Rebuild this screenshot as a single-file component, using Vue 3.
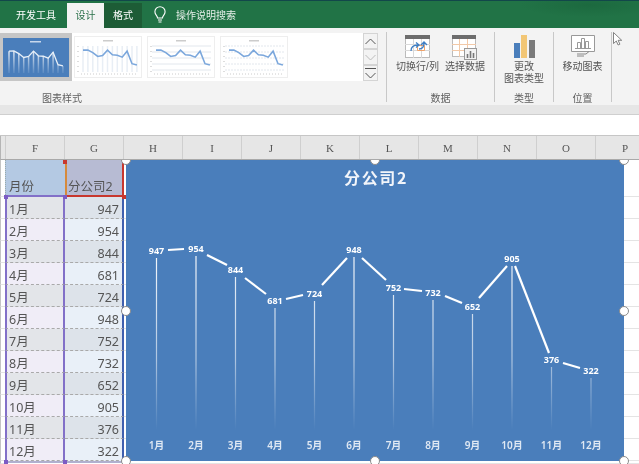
<script setup>
const months = ['1月', '2月', '3月', '4月', '5月', '6月', '7月', '8月', '9月', '10月', '11月', '12月']
const values = [947, 954, 844, 681, 724, 948, 752, 732, 652, 905, 376, 322]
const columns = ['F', 'G', 'H', 'I', 'J', 'K', 'L', 'M', 'N', 'O', 'P']

const rows = months.map((month, i) => ({ month, value: values[i], odd: i % 2 === 0 }))

// chart coordinates are relative to the chart box (126,160)
const labelY = [91, 89, 110, 141, 134, 90, 128, 133, 147, 99, 200, 211]
const points = months.map((month, i) => ({
  month,
  value: values[i],
  x: 30.5 + i * 39.5,
  labelY: labelY[i]
}))

const segments = [
  [42, 90, 58, 89], [81, 95, 101, 105], [119, 118, 140, 134], [160, 139, 177, 135],
  [196, 125, 221, 98], [236, 98, 260, 120], [278, 129, 296, 131], [319, 136, 336, 143],
  [353, 138, 381, 106], [389, 106, 423, 193], [437, 203, 454, 208]
]

const thumbPoints = months.map((m, i) => ({
  x: 6 + i * 4.9,
  y: 35.6 - values[i] * 0.0237
}))
const thumbPath = thumbPoints.map(p => `${p.x},${p.y}`).join(' ')
</script>

<template>
  <div class="window">
    <header class="tabbar">
      <span class="tab">开发工具</span>
      <span class="tab active">设计</span>
      <span class="tab format">格式</span>
      <svg class="bulb" width="14" height="18" viewBox="0 0 14 18" fill="none" stroke="#fff" stroke-width="1.1">
        <path d="M4.5 12c0-2.2-2.6-3.2-2.6-6.2a5.1 5.1 0 0 1 10.2 0c0 3-2.6 4-2.6 6.2z" />
        <path d="M5 14h4M5.5 16h3" />
      </svg>
      <span class="search">操作说明搜索</span>
    </header>

    <section class="ribbon">
      <div class="styles">
        <div class="gallery-row">
          <div class="gallery">
            <div class="thumb selected">
              <svg width="66" height="39" viewBox="0 0 66 39">
                <defs>
                  <linearGradient id="thumbDrop" gradientUnits="userSpaceOnUse" x1="0" y1="12" x2="0" y2="35">
                    <stop offset="0" stop-color="#fff" stop-opacity=".85" />
                    <stop offset="1" stop-color="#fff" stop-opacity=".1" />
                  </linearGradient>
                </defs>
                <rect width="66" height="39" fill="#4a7ebb" />
                <rect x="27" y="3" width="11" height="1.5" fill="#c8d8ec" />
                <path v-for="p in thumbPoints" :key="p.x" :d="`M${p.x} ${p.y}V35`" stroke="url(#thumbDrop)" stroke-width="1.5" />
                <polyline :points="thumbPath" fill="none" stroke="#e8f0f8" stroke-width="1.3" />
              </svg>
            </div>
            <div class="thumb plain">
              <svg width="66" height="40" viewBox="0 0 66 40">
                <rect x="28" y="3" width="10" height="1.5" fill="#ccc" />
                <path v-for="p in thumbPoints" :key="p.x" :d="`M${p.x + 2} 9V35`" stroke="#e8eef5" stroke-width="1.5" />
                <path d="M3 9V36" stroke="#bbb" stroke-dasharray="1 4" />
                <polyline :points="thumbPath" fill="none" stroke="#7ba7dc" stroke-width="1.6" transform="translate(2 0)" />
                <path d="M6 37H63" stroke="#ccc" stroke-dasharray="1 2" />
              </svg>
            </div>
            <div class="thumb plain">
              <svg width="66" height="40" viewBox="0 0 66 40">
                <rect x="28" y="3" width="10" height="1.5" fill="#ccc" />
                <path v-for="i in 5" :key="i" :d="`M4 ${3 + i * 6}H63`" stroke="#e2e7ed" />
                <path d="M3 9V36" stroke="#bbb" stroke-dasharray="1 4" />
                <polyline :points="thumbPath" fill="none" stroke="#7ba7dc" stroke-width="1.6" transform="translate(2 0)" />
                <path d="M6 37H63" stroke="#ccc" stroke-dasharray="1 2" />
              </svg>
            </div>
            <div class="thumb plain">
              <svg width="66" height="40" viewBox="0 0 66 40">
                <rect x="28" y="3" width="10" height="1.5" fill="#ccc" />
                <path v-for="i in 5" :key="i" :d="`M4 ${3 + i * 6}H63`" stroke="#e2e7ed" stroke-dasharray="2 1" />
                <path d="M3 9V36" stroke="#bbb" stroke-dasharray="1 4" />
                <polyline :points="thumbPath" fill="none" stroke="#7ba7dc" stroke-width="1.6" transform="translate(2 0)" />
                <path d="M6 37H63" stroke="#ccc" stroke-dasharray="1 2" />
              </svg>
            </div>
          </div>
          <div class="spinner">
            <span class="spin">
              <svg width="11" height="7" viewBox="0 0 11 7" fill="none" stroke="#555"><path d="M.5 6 5.5 1l5 5" /></svg>
            </span>
            <span class="spin">
              <svg width="11" height="7" viewBox="0 0 11 7" fill="none" stroke="#bbb"><path d="M.5 1l5 5 5-5" /></svg>
            </span>
            <span class="spin more">
              <svg width="11" height="12" viewBox="0 0 11 12" fill="none" stroke="#555"><path d="M0 1.5H11" /><path d="M.5 6l5 5 5-5" /></svg>
            </span>
          </div>
        </div>
        <div class="group-name">图表样式</div>
      </div>

      <div class="group data">
        <div class="tools">
          <div class="tool">
            <div class="icon">
              <svg width="25" height="23" viewBox="0 0 25 23">
                <rect x=".5" y=".5" width="24" height="22" fill="#fff" stroke="#bbb" />
                <rect width="25" height="4" fill="#6d6d6d" />
                <path d="M0 9.5H25M0 15.5H25M8.5 4V23M16.5 4V23" stroke="#d9d9d9" />
                <path d="M12.5 10.5h7v5h-7z" stroke="#f0a36a" fill="none" />
                <path d="M6 16c0-4 2-6 7-6M11 7.5l3 2.5-3 2.500M14 14c3 0 5-1 5-6M16 10l3-3 3 3" fill="none" stroke="#3f7fc4" stroke-width="1.3" />
              </svg>
            </div>
            <span>切换行/列</span>
          </div>
          <div class="tool">
            <div class="icon">
              <svg width="25" height="25" viewBox="0 0 25 25">
                <rect x=".5" y=".5" width="23" height="21" fill="#fff" stroke="#bbb" />
                <rect width="24" height="4" fill="#6d6d6d" />
                <path d="M0 9.5H24M0 15.5H24M7.5 4V22M15.5 4V22" stroke="#f2c9a8" />
                <rect x="12.5" y="13.5" width="12" height="11" fill="#f3f3f3" stroke="#999" />
                <path d="M15.5 23v-4M18.5 23v-7M21.5 23v-5" stroke="#777" stroke-width="1.6" />
              </svg>
            </div>
            <span>选择数据</span>
          </div>
        </div>
        <div class="group-name">数据</div>
      </div>

      <div class="group type">
        <div class="tools">
          <div class="tool">
            <div class="icon">
              <svg width="21" height="23" viewBox="0 0 21 23">
                <rect y="8" width="6" height="15" fill="#4a7ebb" />
                <rect x="7" width="6" height="23" fill="#f2c675" />
                <rect x="15" y="5" width="6" height="18" fill="#7a7a7a" />
              </svg>
            </div>
            <span>更改<br />图表类型</span>
          </div>
        </div>
        <div class="group-name">类型</div>
      </div>

      <div class="group place">
        <div class="tools">
          <div class="tool">
            <div class="icon">
              <svg width="24" height="22" viewBox="0 0 24 22" fill="none">
                <path d="M.5.5h23v16H.5z" fill="#fff" stroke="#999" />
                <path d="M6.5 13V7.5h3V13M10.5 13V3.500h3V13M14.5 13V6.500h3V13M4 13.500h16" stroke="#999" />
                <path d="M6 19h9l3-2.500M6 21h7" stroke="#888" />
              </svg>
            </div>
            <span>移动图表</span>
          </div>
        </div>
        <div class="group-name">位置</div>
      </div>

      <svg class="cursor" width="10" height="14" viewBox="0 0 10 14">
        <path d="M.5.5v11l2.8-2.5 1.8 4 1.8-.8-1.8-3.9h3.600z" fill="#fff" stroke="#666" stroke-width=".8" />
      </svg>
    </section>
    <div class="ribbon-foot"></div>
    <div class="formula"></div>

    <div class="col-heads">
      <span v-for="c in columns" :key="c" class="col-head">{{ c }}</span>
    </div>

    <div class="sheet">
      <div class="row head">
        <div class="gutter"></div>
        <div class="cell month-head">月份</div>
        <div class="cell company-head">分公司2</div>
        <div class="rest"></div>
      </div>
      <div v-for="row in rows" :key="row.month" class="row" :class="{ odd: row.odd }">
        <div class="gutter"></div>
        <div class="cell month">{{ row.month }}</div>
        <div class="cell value">{{ row.value }}</div>
        <div class="rest"></div>
      </div>
      <div class="row tail">
        <div class="gutter"></div>
        <div class="strip"></div>
        <div class="rest"></div>
      </div>

      <i class="mark red" style="left: 63px; top: 0"></i>
      <i class="mark purple" style="left: 4px; top: 35px"></i>
      <i class="mark purple" style="left: 63px; top: 35px"></i>
      <i class="mark red" style="left: 122px; top: 35px"></i>
      <i class="mark purple" style="left: 4px; top: 300px"></i>
      <i class="mark purple" style="left: 63px; top: 300px"></i>

      <div class="chart">
        <svg width="498" height="301" viewBox="0 0 498 301">
          <defs>
            <linearGradient id="drop" gradientUnits="userSpaceOnUse" x1="0" y1="95" x2="0" y2="270">
              <stop offset="0" stop-color="#fff" stop-opacity=".95" />
              <stop offset=".6" stop-color="#fff" stop-opacity=".55" />
              <stop offset="1" stop-color="#fff" stop-opacity="0" />
            </linearGradient>
          </defs>
          <text class="chart-title" x="250" y="24" text-anchor="middle">分公司2</text>
          <path
            v-for="p in points"
            :key="p.month"
            :d="`M${p.x} ${p.labelY + 7}V270`"
            stroke="url(#drop)"
            stroke-width="1.2"
          />
          <line
            v-for="(s, i) in segments"
            :key="i"
            :x1="s[0]"
            :y1="s[1]"
            :x2="s[2]"
            :y2="s[3]"
            stroke="#fff"
            stroke-width="2.2"
          />
          <text
            v-for="p in points"
            :key="'v' + p.month"
            class="point-label"
            :x="p.x"
            :y="p.labelY + 3"
            text-anchor="middle"
          >{{ p.value }}</text>
          <text
            v-for="p in points"
            :key="'m' + p.month"
            class="axis-label"
            :x="p.x"
            y="289"
            text-anchor="middle"
          >{{ p.month }}</text>
        </svg>
        <i class="handle" style="left: 0; top: 0"></i>
        <i class="handle" style="left: 50%; top: 0"></i>
        <i class="handle" style="left: 100%; top: 0"></i>
        <i class="handle" style="left: 0; top: 50%"></i>
        <i class="handle" style="left: 100%; top: 50%"></i>
        <i class="handle" style="left: 0; top: 100%"></i>
        <i class="handle" style="left: 50%; top: 100%"></i>
        <i class="handle" style="left: 100%; top: 100%"></i>
      </div>
    </div>
  </div>
</template>

<style>
html, body {
  margin: 0;
  overflow: hidden;
  background: #fff;
}
</style>

<style scoped>
.window {
  width: 639px;
  height: 464px;
  overflow: hidden;
  background: #fff;
  font-family: "Noto Sans", "Noto Sans CJK SC", sans-serif;
  color: #555;
  filter: blur(0.3px);
}

.tabbar {
  height: 27px;
  border-top: 1px solid #12474a;
  background: radial-gradient(ellipse 70px 12px at 590px 4px, #1c693f, transparent), #217346;
  display: flex;
  align-items: flex-end;
  color: #fff;
  font-size: 10px;
}

.tab {
  height: 25px;
  line-height: 25px;
  padding: 0 11px 0 16px;
}

.tab.active {
  width: 37px;
  padding: 0;
  text-align: center;
  background: #f3f3f3;
  color: #2a7049;
}

.tab.format {
  width: 38px;
  padding: 0;
  text-align: center;
  background: #1d5c36;
}

.bulb {
  margin: 0 9px 4px 11px;
}

.search {
  height: 25px;
  line-height: 25px;
  color: #e6efe9;
}

.ribbon {
  height: 77px;
  position: relative;
  display: flex;
  background: #f3f3f3;
  font-size: 10px;
  color: #555;
}

.styles {
  width: 386px;
  flex: none;
  padding-top: 5px;
  box-sizing: border-box;
}

.gallery-row {
  display: flex;
  height: 48px;
}

.gallery {
  width: 363px;
  background: #fff;
  display: flex;
  align-items: center;
  gap: 7px;
}

.thumb {
  flex: none;
  display: flex;
}

.thumb.selected {
  width: 72px;
  height: 48px;
  background: #c6c6c6;
  align-items: center;
  justify-content: center;
  margin-right: -4px;
}

.thumb.plain {
  background: #fff;
  box-shadow: 0 0 0 1px #eeeeee;
}

.spinner {
  width: 15px;
  display: flex;
  flex-direction: column;
}

.spin {
  height: 16px;
  box-sizing: border-box;
  border: 1px solid #d4d4d4;
  display: flex;
  align-items: center;
  justify-content: center;
}

.group-name {
  text-align: center;
  color: #5f5f5f;
  line-height: 14px;
  position: absolute;
  bottom: 0;
}

.styles .group-name {
  left: 0;
  width: 124px;
}

.group {
  flex: none;
  position: relative;
  box-sizing: border-box;
  margin: 4px 0 3px;
  border-left: 1px solid #c8c8c8;
}

.group .group-name {
  left: 0;
  right: 0;
  bottom: -3px;
}

.group.data { width: 108px; }
.group.type { width: 59px; }
.group.place { width: 59px; border-right: 1px solid #c8c8c8; }

.tools {
  display: flex;
  justify-content: center;
  gap: 6px;
  padding-top: 3px;
}

.tool {
  display: flex;
  flex-direction: column;
  align-items: center;
  text-align: center;
  line-height: 12px;
  white-space: nowrap;
  font-family: "Liberation Sans", "Noto Sans CJK SC", sans-serif;
}

.icon {
  height: 26px;
}

.icon svg {
  display: block;
}

.cursor {
  position: absolute;
  left: 613px;
  top: 4px;
}

.ribbon-foot {
  height: 9px;
  background: #e6e6e6;
  border-bottom: 1px solid #cfcfcf;
}

.formula {
  height: 20px;
  background: #fff;
  border-bottom: 1px solid #c6c6c6;
}

.col-heads {
  height: 23px;
  padding-left: 4px;
  display: flex;
  background: #e6e6e6;
  border-bottom: 1px solid #a9a9a9;
  border-left: 1px solid #b5b5b5;
}

.col-head {
  flex: none;
  width: 59px;
  box-sizing: border-box;
  border-left: 1px solid #cfcfcf;
  text-align: center;
  line-height: 24px;
  font-family: "Liberation Serif", serif;
  font-size: 11px;
  color: #555;
}

.sheet {
  position: relative;
  height: 304px;
  overflow: hidden;
}

.row {
  display: flex;
  height: 22px;
}

.row.head {
  height: 37px;
}

.row.tail {
  height: 3px;
}

.gutter {
  width: 5px;
  flex: none;
  box-sizing: border-box;
  border-left: 1px solid #c4c4c4;
  border-bottom: 1px solid #e4e4e4;
}

.cell {
  flex: none;
  box-sizing: border-box;
  border-bottom: 1px dashed #a9a9a9;
  line-height: 25px;
  font-size: 12.5px;
  color: #555;
  padding: 0 3px;
}

.month {
  width: 60px;
  padding-left: 2px;
  background: #f0edf7;
  border-left: 2px solid #8270c8;
  border-right: 2px solid #8270c8;
}

.odd .month {
  background: #e3e5e9;
}

.value {
  width: 59px;
  text-align: right;
  background: #e9f0f8;
  border-right: 2px solid #3f5fae;
}

.odd .value {
  background: #dde3ea;
}

.month-head,
.company-head {
  padding-top: 14px;
}

.month-head {
  width: 60px;
  padding-left: 3px;
  background: #b4c9e3;
  border-bottom: 2px solid #8270c8;
  border-left: 1px dotted #9aa;
}

.company-head {
  width: 59px;
  padding-left: 1px;
  background: #b7bbd3;
  border-left: 2px solid #d68a3c;
  border-right: 2px solid #c8372e;
  border-bottom: 2px solid #c8372e;
  white-space: nowrap;
}

.strip {
  width: 119px;
  height: 2px;
  flex: none;
  background: #b0b0cf;
}

.rest {
  flex: 1;
  border-bottom: 1px solid #e4e4e4;
}

.mark {
  position: absolute;
  width: 4px;
  height: 4px;
}

.mark.purple { background: #7c5cc4; }
.mark.red { background: #c8372e; }

.chart {
  position: absolute;
  left: 126px;
  top: 0;
  width: 498px;
  height: 301px;
  background: #4a7ebb;
}

.chart svg {
  display: block;
}

.chart-title {
  font-family: "Noto Sans CJK SC", sans-serif;
  font-size: 16px;
  font-weight: 700;
  letter-spacing: 1.6px;
  fill: #f2f5fa;
}

.point-label {
  font-family: "Open Sans", "Noto Sans", sans-serif;
  font-size: 9px;
  font-weight: 700;
  fill: #fff;
}

.axis-label {
  font-family: "Noto Sans", "Noto Sans CJK SC", sans-serif;
  font-size: 10px;
  font-weight: 600;
  fill: #dfe8f3;
}

.handle {
  position: absolute;
  width: 8px;
  height: 8px;
  margin: -5px 0 0 -5px;
  border: 1px solid #8c8c8c;
  border-radius: 50%;
  background: #fff;
}
</style>
